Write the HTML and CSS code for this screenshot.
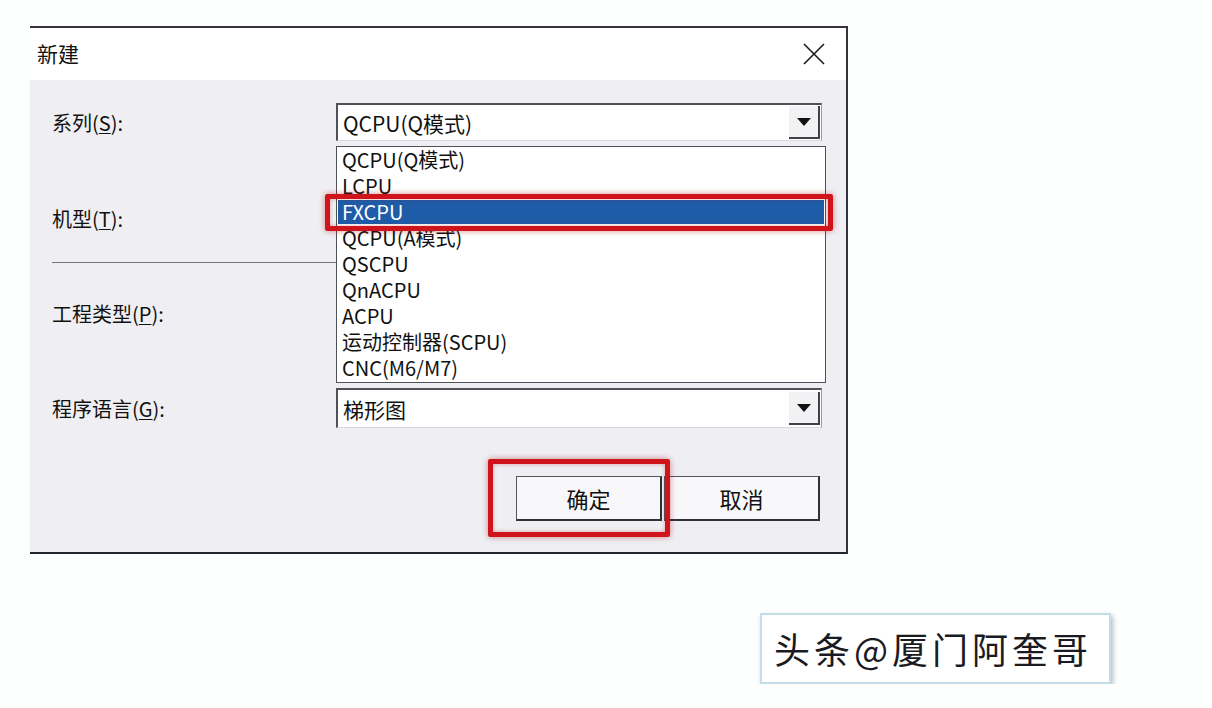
FILE: index.html
```html
<!DOCTYPE html>
<html lang="zh-CN">
<head>
    <meta charset="UTF-8">
    <title>新建</title>
    <link rel="stylesheet" href="styles.css">
</head>
<body>

    <div class="dialog">
        <!-- Title bar -->
        <div class="title-bar">
            <span class="title">新建</span>
            <svg class="close" width="22" height="22" viewBox="0 0 22 22">
                <path d="M1 1 L21 21 M21 1 L1 21" stroke="#1a1a1a" stroke-width="1.6" fill="none"/>
            </svg>
        </div>

        <!-- Form body -->
        <div class="dialog-body">
            <div class="field field-series">
                <label>系列(<u>S</u>):</label>
                <div class="combo">
                    <span class="combo-text">QCPU(Q模式)</span>
                    <span class="combo-btn"><i class="arrow"></i></span>
                </div>
            </div>

            <div class="field field-model">
                <label>机型(<u>T</u>):</label>
                <div class="combo">
                    <span class="combo-text"></span>
                    <span class="combo-btn"><i class="arrow"></i></span>
                </div>
            </div>

            <div class="separator"></div>

            <div class="field field-type">
                <label>工程类型(<u>P</u>):</label>
            </div>

            <div class="field field-lang">
                <label>程序语言(<u>G</u>):</label>
                <div class="combo combo-tall">
                    <span class="combo-text">梯形图</span>
                    <span class="combo-btn"><i class="arrow"></i></span>
                </div>
            </div>

            <div class="buttons">
                <button class="btn">确定</button>
                <button class="btn btn-cancel">取消</button>
            </div>
        </div>

        <!-- Open dropdown list of the series combo -->
        <ul class="dropdown">
            <li>QCPU(Q模式)</li>
            <li>LCPU</li>
            <li class="selected">FXCPU</li>
            <li>QCPU(A模式)</li>
            <li>QSCPU</li>
            <li>QnACPU</li>
            <li>ACPU</li>
            <li>运动控制器(SCPU)</li>
            <li>CNC(M6/M7)</li>
        </ul>

        <!-- Red annotation frames -->
        <div class="mark mark-item"></div>
        <div class="mark mark-ok"></div>
    </div>

    <div class="watermark">头条@厦门阿奎哥</div>

</body>
</html>
```

FILE: styles.css
```css
body {
    margin: 0;
    padding: 26px 0 0 30px;
    background-color: #fdfefe;
    font-family: "Noto Sans CJK SC", "Noto Sans", sans-serif;
    color: #111;
}

.dialog {
    position: relative;
    width: 816px;
    border-top: 2px solid #34343c;
    border-right: 2px solid #34343c;
    border-bottom: 2px solid #24242c;
    background-color: #efeff3;
}

/* Title bar */
.title-bar {
    height: 52px;
    background-color: #fff;
    display: flex;
    align-items: center;
    justify-content: space-between;
    padding: 0 21px 0 7px;
}

.title {
    font-size: 21px;
    margin-top: -2px;
}

.close {
    margin-top: -1px;
}

/* Body */
.dialog-body {
    padding: 23px 0 31px 22px;
}

.field {
    display: flex;
    align-items: center;
    height: 38px;
}

.field label {
    width: 284px;
    font-size: 20px;
}

.field u {
    text-decoration-thickness: 1px;
    text-underline-offset: 2px;
}

.field-model {
    margin-top: 58px;
}

.field-type {
    margin-top: 31px;
}

.field-lang {
    margin-top: 56px;
    height: 40px;
}

.separator {
    margin-top: 25px;
    height: 1px;
    width: 500px;
    background-color: #77777c;
}

/* Combo box */
.combo {
    width: 486px;
    height: 38px;
    display: flex;
    align-items: center;
    justify-content: space-between;
    background-color: #fff;
    border-top: 2px solid #505058;
    border-left: 2px solid #505058;
    border-right: 1px solid #9a9aa0;
    border-bottom: 1px solid #d8d8dc;
    box-sizing: border-box;
}

.combo-tall {
    height: 40px;
}

.combo-text {
    font-size: 21px;
    padding-left: 5px;
}

.combo-btn {
    width: 31px;
    height: 33px;
    margin-right: 1px;
    background-color: #f2f2f4;
    border-right: 2px solid #404048;
    border-bottom: 2px solid #404048;
    box-sizing: border-box;
    display: flex;
    align-items: center;
    justify-content: center;
}

.arrow {
    width: 0;
    height: 0;
    border-left: 7px solid transparent;
    border-right: 7px solid transparent;
    border-top: 8px solid #111;
}

/* Buttons */
.buttons {
    display: flex;
    margin-top: 48px;
    padding-left: 464px;
    gap: 2px;
}

.btn {
    height: 45px;
    font-family: inherit;
    font-size: 22px;
    color: #111;
    background-color: #f8f8fa;
    border: 1px solid #55555c;
    border-right: 2px solid #303038;
    border-bottom: 2px solid #303038;
    padding: 0;
    width: 146px;
}

.btn-cancel {
    width: 156px;
}

/* Dropdown list */
.dropdown {
    position: absolute;
    left: 306px;
    top: 118px;
    width: 490px;
    height: 237px;
    margin: 0;
    padding: 0;
    list-style: none;
    background-color: #fff;
    border: 1px solid #505058;
    box-sizing: border-box;
}

.dropdown li {
    height: 26px;
    line-height: 26px;
    font-size: 20px;
    padding-left: 5px;
    white-space: nowrap;
}

.dropdown li.selected {
    background-color: #1f5ca8;
    color: #fff;
    margin: 1px 1px;
    padding-left: 4px;
    height: 24px;
    line-height: 24px;
}

/* Annotation frames */
.mark {
    position: absolute;
    border: 5px solid #d0141c;
    border-radius: 2px;
    box-shadow: 0 0 6px rgba(160, 0, 0, 0.45), inset 0 0 4px rgba(160, 0, 0, 0.35);
}

.mark-item {
    left: 295px;
    top: 166px;
    width: 498px;
    height: 27px;
}

.mark-ok {
    left: 458px;
    top: 431px;
    width: 172px;
    height: 68px;
}

/* Watermark */
.watermark {
    margin: 59px 0 0 730px;
    width: 335px;
    height: 67px;
    border: 2px solid #c4dce6;
    background-color: #fff;
    box-shadow: 2px 3px 5px rgba(90, 110, 130, 0.45);
    font-size: 36px;
    letter-spacing: 4px;
    line-height: 67px;
    padding-left: 12px;
    color: #1a1a22;
    white-space: nowrap;
    overflow: hidden;
}
```
